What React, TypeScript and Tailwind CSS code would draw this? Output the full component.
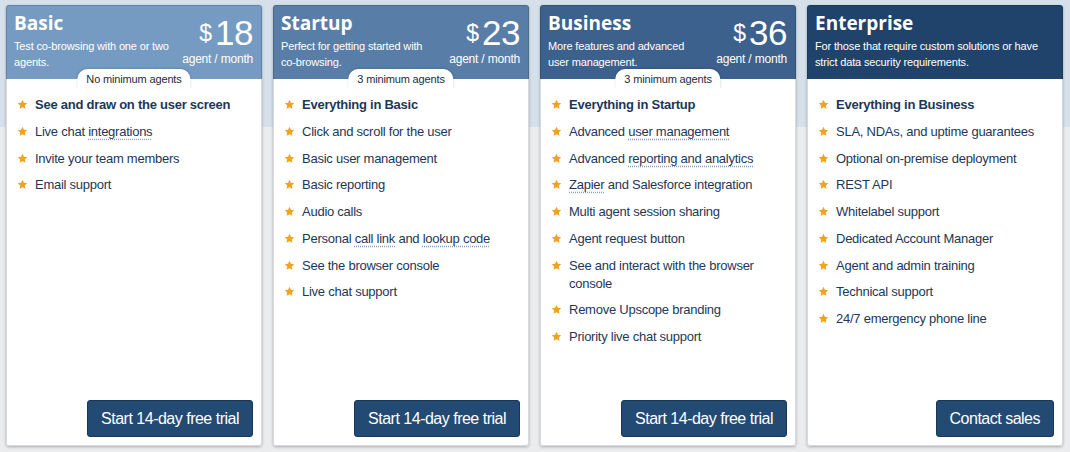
import React from "react";

type Feature = { parts: (string | { u: string })[]; bold?: boolean };

type Plan = {
  name: string;
  desc: string[];
  price?: string;
  badge?: string;
  headerBg: string;
  features: Feature[];
  cta: string;
};

const f = (...parts: (string | { u: string })[]): Feature => ({ parts });

const plans: Plan[] = [
  {
    name: "Basic",
    desc: ["Test co-browsing with one or two", "agents."],
    price: "18",
    badge: "No minimum agents",
    headerBg: "bg-[#759bc3]",
    features: [
      { parts: ["See and draw on the user screen"], bold: true },
      f("Live chat ", { u: "integrations" }),
      f("Invite your team members"),
      f("Email support"),
    ],
    cta: "Start 14-day free trial",
  },
  {
    name: "Startup",
    desc: ["Perfect for getting started with", "co-browsing."],
    price: "23",
    badge: "3 minimum agents",
    headerBg: "bg-[#587ea7]",
    features: [
      { parts: ["Everything in Basic"], bold: true },
      f("Click and scroll for the user"),
      f("Basic user management"),
      f("Basic reporting"),
      f("Audio calls"),
      f("Personal ", { u: "call link" }, " and ", { u: "lookup code" }),
      f("See the browser console"),
      f("Live chat support"),
    ],
    cta: "Start 14-day free trial",
  },
  {
    name: "Business",
    desc: ["More features and advanced", "user management."],
    price: "36",
    badge: "3 minimum agents",
    headerBg: "bg-[#3c618c]",
    features: [
      { parts: ["Everything in Startup"], bold: true },
      f("Advanced ", { u: "user management" }),
      f("Advanced ", { u: "reporting and analytics" }),
      f({ u: "Zapier" }, " and Salesforce integration"),
      f("Multi agent session sharing"),
      f("Agent request button"),
      f("See and interact with the browser console"),
      f("Remove Upscope branding"),
      f("Priority live chat support"),
    ],
    cta: "Start 14-day free trial",
  },
  {
    name: "Enterprise",
    desc: ["For those that require custom solutions or have", "strict data security requirements."],
    headerBg: "bg-[#1f436b]",
    features: [
      { parts: ["Everything in Business"], bold: true },
      f("SLA, NDAs, and uptime guarantees"),
      f("Optional on-premise deployment"),
      f("REST API"),
      f("Whitelabel support"),
      f("Dedicated Account Manager"),
      f("Agent and admin training"),
      f("Technical support"),
      f("24/7 emergency phone line"),
    ],
    cta: "Contact sales",
  },
];

function Star() {
  return (
    <svg width="11" height="11" viewBox="0 0 24 24" className="shrink-0 mt-[3px]">
      <path
        d="M12 1.8l3.1 6.6 7.2.9-5.3 5 1.4 7.1L12 17.9l-6.4 3.5 1.4-7.1-5.3-5 7.2-.9z"
        fill="#f3a21f"
      />
    </svg>
  );
}

function Card({ plan }: { plan: Plan }) {
  return (
    <div className="flex-1 flex flex-col bg-white rounded-[3px] shadow-[0_1px_3px_rgba(0,0,0,0.28)]">
      <div
        className={`relative h-[74px] ${plan.headerBg} rounded-t-[3px] border border-b-0 border-[rgba(0,0,0,0.15)] px-[7px] pt-[5px] flex justify-between text-white`}
      >
        <div>
          <div className="font-['Open_Sans',sans-serif] font-bold text-[19px] leading-[24px]">
            {plan.name}
          </div>
          <div className="mt-[3px] text-[11px] leading-[16px] tracking-[-0.15px] whitespace-nowrap">
            {plan.desc.map((d, i) => (
              <div key={i}>{d}</div>
            ))}
          </div>
        </div>
        {plan.price && (
          <div className="flex flex-col items-end pr-[1px]">
            <div className="flex items-end leading-none mt-[7px]">
              <span className="text-[23px] leading-none mb-[3px] mr-[3px]">$</span>
              <span className="text-[35px] leading-[30px] tracking-[-0.5px]">{plan.price}</span>
            </div>
            <div className="text-[12px] leading-[14px] mt-[4px] tracking-[-0.2px]">agent / month</div>
          </div>
        )}
        {plan.badge && (
          <div className="absolute left-1/2 -translate-x-1/2 top-[63px] h-[20px] px-[9px] bg-white rounded-t-[10px] shadow-[0_-1px_2px_rgba(0,0,0,0.12)] text-[#1c2b3d] text-[11px] tracking-[-0.15px] leading-[20px] whitespace-nowrap">
            {plan.badge}
          </div>
        )}
      </div>
      <div className="flex-1 flex flex-col border border-t-0 border-[#d6dadf] rounded-b-[3px] pl-[10px] pr-[8px] pt-[17px] pb-[8px]">
        <ul className="flex flex-col gap-[8.75px]">
          {plan.features.map((ft, i) => (
            <li
              key={i}
              className="flex gap-[7px] text-[13px] leading-[18px] tracking-[-0.25px] text-[#1d3759]"
            >
              <Star />
              <span className={ft.bold ? "font-bold" : ""}>
                {ft.parts.map((p, j) =>
                  typeof p === "string" ? (
                    <React.Fragment key={j}>{p}</React.Fragment>
                  ) : (
                    <span
                      key={j}
                      className="underline decoration-dotted decoration-[#8d9db3] underline-offset-[3px]"
                    >
                      {p.u}
                    </span>
                  )
                )}
              </span>
            </li>
          ))}
        </ul>
        <div className="mt-auto flex justify-end">
          <button className="h-[37px] px-[13px] bg-[#234a72] border border-[#17375a] rounded-[3px] text-white text-[16px] tracking-[-0.5px]">
            {plan.cta}
          </button>
        </div>
      </div>
    </div>
  );
}

export default function App() {
  return (
    <div className="w-[1070px] h-[452px] bg-[linear-gradient(to_bottom,#d5e0ea_0px,#d5e0ea_127px,#ebeced_127px)] font-['Liberation_Sans',Arial,sans-serif] flex gap-[11px] pl-[6px] pr-[7px] pt-[5px] pb-[6px]">
      {plans.map((p) => (
        <Card key={p.name} plan={p} />
      ))}
    </div>
  );
}
